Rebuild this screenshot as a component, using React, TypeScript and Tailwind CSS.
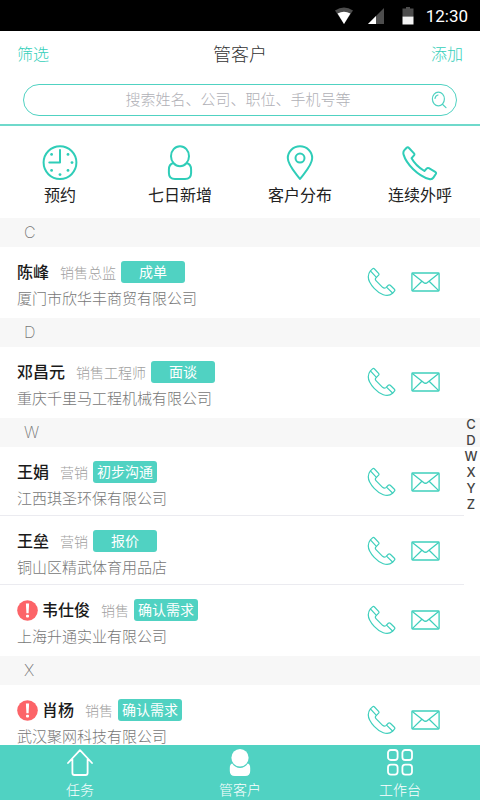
import React from "react";

type Customer = {
  name: string;
  role: string;
  stage: string;
  company: string;
  alert?: boolean;
};

const groups: { letter: string; customers: Customer[] }[] = [
  { letter: "C", customers: [{ name: "陈峰", role: "销售总监", stage: "成单", company: "厦门市欣华丰商贸有限公司" }] },
  { letter: "D", customers: [{ name: "邓昌元", role: "销售工程师", stage: "面谈", company: "重庆千里马工程机械有限公司" }] },
  {
    letter: "W",
    customers: [
      { name: "王娟", role: "营销", stage: "初步沟通", company: "江西琪圣环保有限公司" },
      { name: "王垒", role: "营销", stage: "报价", company: "铜山区精武体育用品店" },
      { name: "韦仕俊", role: "销售", stage: "确认需求", company: "上海升通实业有限公司", alert: true },
    ],
  },
  { letter: "X", customers: [{ name: "肖杨", role: "销售", stage: "确认需求", company: "武汉聚网科技有限公司", alert: true }] },
];

const indexLetters = ["C", "D", "W", "X", "Y", "Z"];

function StatusBar() {
  return (
    <div className="flex h-[31px] shrink-0 items-center justify-end bg-black pr-3 text-white">
      <svg width="20" height="18" viewBox="0 0 20 18" className="mr-3.5">
        <path d="M1 3.6Q10-2.6 19 3.6L10 17Z" fill="#4d4d4d" />
        <path d="M3.6 6.6Q10 2.8 16.4 6.6L10 17Z" fill="#fff" />
      </svg>
      <svg width="16" height="18" viewBox="0 0 16 18" className="mr-[18px]">
        <path d="M0 17L16 1V17Z" fill="#4d4d4d" />
        <path d="M0 17L8 9V17Z" fill="#fff" />
      </svg>
      <svg width="12" height="18" viewBox="0 0 12 18" className="mr-3">
        <path d="M4 0H8V1.5H11.5V9.5H.5V1.5H4Z" fill="#4d4d4d" />
        <path d="M.5 9.5H11.5V17.5H.5Z" fill="#f4f4f4" />
      </svg>
      <span className="font-[Roboto,sans-serif] text-[17px] leading-6">12:30</span>
    </div>
  );
}

function ClockIcon() {
  return (
    <svg width="36" height="36" viewBox="0 0 36 36" fill="none" stroke="#2fcdb8" strokeWidth="2">
      <circle cx="18" cy="17.6" r="16.4" />
      <path d="M18 5.1V17.6H7.3" strokeLinecap="round" strokeLinejoin="round" />
      <g fill="#2fcdb8" stroke="none">
        <circle cx="9.6" cy="9.4" r="1.4" />
        <circle cx="26" cy="9.4" r="1.4" />
        <circle cx="30" cy="17.6" r="1.4" />
        <circle cx="26" cy="25.4" r="1.4" />
        <circle cx="18" cy="29.6" r="1.4" />
        <circle cx="9.6" cy="25.4" r="1.4" />
      </g>
    </svg>
  );
}

function PersonIcon() {
  return (
    <svg width="36" height="36" viewBox="0 0 36 36" fill="none" stroke="#2fcdb8" strokeWidth="2">
      <ellipse cx="18" cy="11.2" rx="9" ry="10" />
      <path d="M11.4 18Q6.9 19.2 6.9 24.5V28Q6.9 34 13 34H23Q29.1 34 29.1 28V24.5Q29.1 19.2 24.6 18" />
    </svg>
  );
}

function PinIcon() {
  return (
    <svg width="36" height="36" viewBox="0 0 36 36" fill="none" stroke="#2fcdb8" strokeWidth="2" strokeLinejoin="round">
      <path d="M18 34C14 28.5 5.8 20.5 5.8 13.1A12.2 11.9 0 0 1 30.2 13.1C30.2 20.5 22 28.5 18 34Z" />
      <circle cx="18" cy="13.1" r="4.5" />
    </svg>
  );
}

function BigPhoneIcon() {
  return (
    <svg width="36" height="36" viewBox="0 0 36 36" fill="none" stroke="#2fcdb8" strokeWidth="2" strokeLinejoin="round">
      <path d="M4.4 3Q5.8 1.6 7 3L12 8.4Q12.8 9.4 12 10.4L9.6 13.2Q13.5 20.5 22.4 26L24.6 23.6Q25.6 22.6 26.9 23.2L33.2 26.8Q34.6 27.6 33.8 29L31.4 32.6Q30 34.8 27.2 34C15.5 30.8 4.2 18.5 1.6 9.6Q.8 7 2.4 5.2Z" />
    </svg>
  );
}

function CallIcon() {
  return (
    <svg width="30" height="30" viewBox="0 0 30 30" fill="none" stroke="#3fcfbc" strokeWidth="1.2" strokeLinejoin="round">
      <path d="M3.4 3.9L5.5 1.9Q6.5 1 7.5 2L11.6 6.4Q12.4 7.3 11.6 8.2L9 10.9C7.8 12.1 8.2 12.9 9.2 13.9L15.6 20.3C16.8 21.4 17.8 21.5 18.9 20.6L21.3 18.3Q22.3 17.4 23.3 18.3L27.4 22.3Q28.3 23.2 27.4 24.2L25.6 26.3C20 31 12.5 27 7.2 21.3C1.8 15.5-1 9.5 3.4 3.9Z" />
      <path d="M3.4 3.9L9.4 10.4M19.5 20.1L25.8 26.2" />
    </svg>
  );
}

function MailIcon() {
  return (
    <svg width="30" height="20" viewBox="0 0 30 20" fill="none" stroke="#3fcfbc" strokeWidth="1.3" strokeLinejoin="round">
      <rect x="0.9" y="1" width="27.2" height="18" rx="0.8" />
      <path d="M1.3 1.4L12.3 10.2Q14.5 12.4 16.7 10.2L27.7 1.4M1.3 18.6L10.9 9.2M27.7 18.6L18.1 9.2" />
    </svg>
  );
}

function AlertIcon() {
  return (
    <svg width="21" height="21" viewBox="0 0 21 21" className="mr-1 shrink-0" role="img" aria-label="提醒">
      <circle cx="10.5" cy="10.5" r="10.3" fill="#fc6468" />
      <path d="M8.9 3.4H12.1L11.6 13.2H9.4Z" fill="#fff" />
      <rect x="9" y="14.8" width="3" height="2.8" rx="1" fill="#fff" />
    </svg>
  );
}

function CustomerRow({ customer }: { customer: Customer }) {
  return (
    <li className="group">
      <div className="mr-4 flex border-b border-[#ebebf0] pt-3.5 pb-[5px] group-last:border-transparent group-last:pb-[7px]">
        <div className="min-w-0 flex-1 pl-[17px]">
          <div className="flex h-[22px] items-center">
            {customer.alert && <AlertIcon />}
            <span className="pb-0.5 text-base leading-5 font-medium text-[#1a1a1a]">{customer.name}</span>
            <span className="ml-[11px] text-sm leading-5 font-light text-[#a0a0a0]">{customer.role}</span>
            <span className="ml-[5px] h-[22px] w-16 rounded-[3px] bg-[#50d2c2] text-center text-sm leading-5 text-white">
              {customer.stage}
            </span>
          </div>
          <p className="mt-[3px] text-[15px] leading-6 font-light text-[#777]">{customer.company}</p>
        </div>
        <div className="flex h-[42px] items-center gap-3.5 pr-[23px]">
          <button type="button" aria-label={"致电" + customer.name}>
            <CallIcon />
          </button>
          <button type="button" aria-label={"发信给" + customer.name}>
            <MailIcon />
          </button>
        </div>
      </div>
    </li>
  );
}

function Header() {
  return (
    <header className="shrink-0 border-b-2 border-[#6fd9cb] pb-2">
      <div className="flex h-[43px] items-center justify-between px-[17px] text-base font-light text-[#35cfba]">
        <button type="button">筛选</button>
        <h1 className="text-lg text-[#333]">管客户</h1>
        <button type="button">添加</button>
      </div>
      <form className="mx-[23px] mt-2.5 flex h-8 items-center rounded-full border border-[#50d2c2] pr-2 pl-9">
        <input
          type="search"
          aria-label="搜索客户"
          placeholder="搜索姓名、公司、职位、手机号等"
          className="min-w-0 flex-1 bg-transparent pb-0.5 text-center text-[15px] font-light outline-none placeholder:text-[#b0b0b6]"
        />
        <button type="button" aria-label="搜索">
          <svg width="18" height="18" viewBox="0 0 18 18" fill="none" stroke="#50d2c2" strokeWidth="1.2" strokeLinecap="round">
            <ellipse cx="8.4" cy="8" rx="6" ry="6.8" />
            <path d="M12.4 13.2L16 16.6M5 7.4Q5.4 4.6 8 4" />
          </svg>
        </button>
      </form>
    </header>
  );
}

function QuickActions() {
  const actions = [
    { label: "预约", icon: <ClockIcon /> },
    { label: "七日新增", icon: <PersonIcon /> },
    { label: "客户分布", icon: <PinIcon /> },
    { label: "连续外呼", icon: <BigPhoneIcon /> },
  ];
  return (
    <div className="grid shrink-0 grid-cols-4 pt-[19px] pb-3">
      {actions.map((action) => (
        <button key={action.label} type="button" className="flex flex-col items-center gap-px text-base leading-6 text-[#222]">
          {action.icon}
          {action.label}
        </button>
      ))}
    </div>
  );
}

function TabBar() {
  const tab = "flex flex-col items-center gap-0.5 text-sm leading-5 font-light text-white";
  return (
    <nav className="grid h-[55px] shrink-0 grid-cols-3 bg-[#50d2c2] pt-1">
      <a href="#tasks" className={tab}>
        <svg width="28" height="28" viewBox="0 0 28 28" fill="none" stroke="#fff" strokeWidth="1.8" strokeLinejoin="round" strokeLinecap="round">
          <path d="M2 14L14 1.2L26 14M6.4 10.5V24Q6.4 26 8.4 26H19.6Q21.6 26 21.6 24V10.5" />
        </svg>
        任务
      </a>
      <a href="#customers" aria-current="page" className={tab}>
        <svg width="28" height="28" viewBox="0 0 28 28" fill="#fff">
          <ellipse cx="14" cy="8.8" rx="8.6" ry="8.8" />
          <path d="M6.2 14.6Q3.8 15.4 3.8 19V22Q3.8 27 8.8 27H19.2Q24.2 27 24.2 22V19Q24.2 15.4 21.8 14.6Q18.8 19 14 19T6.2 14.6Z" />
        </svg>
        管客户
      </a>
      <a href="#workbench" className={tab}>
        <svg width="28" height="28" viewBox="0 0 28 28" fill="none" stroke="#fff" strokeWidth="1.8">
          <rect x="2" y="1" width="9.6" height="10" rx="2.8" />
          <rect x="16.4" y="1" width="9.6" height="10" rx="2.8" />
          <rect x="2" y="15.6" width="9.6" height="10" rx="2.8" />
          <rect x="16.4" y="15.6" width="9.6" height="10" rx="2.8" />
        </svg>
        工作台
      </a>
    </nav>
  );
}

export default function App() {
  return (
    <div className="flex h-screen flex-col bg-white font-['Noto_Sans_CJK_SC',sans-serif]">
      <StatusBar />
      <Header />
      <QuickActions />
      <main className="relative flex min-h-0 flex-1 flex-col">
        <div className="flex-1 overflow-y-auto [scrollbar-width:none]">
          {groups.map((group) => (
            <section key={group.letter}>
              <h2 className="bg-[#f7f7f7] pl-6 font-[Inter,sans-serif] text-base leading-[29px] font-extralight text-[#777]">
                {group.letter}
              </h2>
              <ul>
                {group.customers.map((customer) => (
                  <CustomerRow key={customer.name} customer={customer} />
                ))}
              </ul>
            </section>
          ))}
        </div>
        <div className="absolute top-[198px] right-0 flex w-[18px] flex-col text-center font-[Inter,sans-serif] text-[13px] leading-4 font-medium text-[#444]">
          {indexLetters.map((letter) => (
            <a key={letter} href={"#" + letter}>
              {letter}
            </a>
          ))}
        </div>
      </main>
      <TabBar />
    </div>
  );
}
